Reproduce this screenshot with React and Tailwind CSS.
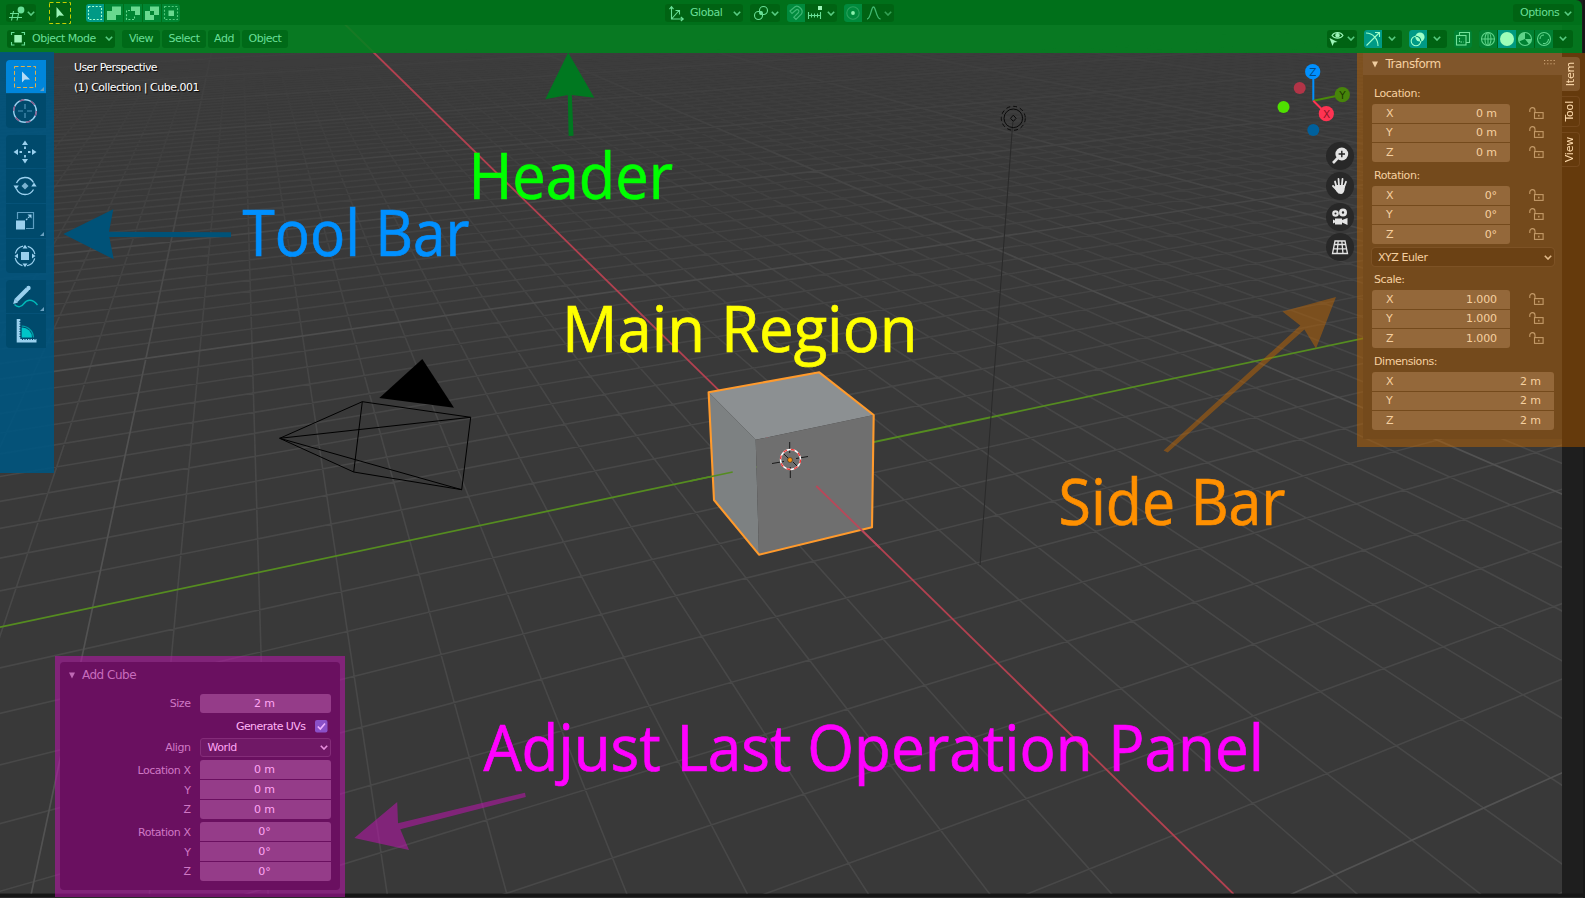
import React from "react";

/* ---------- perspective floor grid ---------- */
const ORIGIN = [790.2, 459.8];
const VAN_X = [239.6, -78.7];
const VAN_Y = [3579, -131.2];
const WX = -0.04563;
const WY = 0.02001;

const depth = (x, y) => 1 + WX * x + WY * y;
function project(x, y) {
  const w = depth(x, y);
  return [
    (ORIGIN[0] + WX * x * VAN_X[0] + WY * y * VAN_Y[0]) / w,
    (ORIGIN[1] + WX * x * VAN_X[1] + WY * y * VAN_Y[1]) / w,
  ];
}
function segment(fixed, value, from, to) {
  const pt = (t) => (fixed === "x" ? [value, t] : [t, value]);
  let a = from;
  let b = to;
  const da = depth(...pt(a));
  const db = depth(...pt(b));
  const near = 0.12;
  if (da < near && db < near) return "";
  if (da < near) a = a + ((near - da) / (db - da)) * (b - a);
  if (db < near) b = b + ((near - db) / (da - db)) * (a - b);
  const p = project(...pt(a));
  const q = project(...pt(b));
  return `M${p[0].toFixed(1)} ${p[1].toFixed(1)}L${q[0].toFixed(1)} ${q[1].toFixed(1)}`;
}
function gridPath(step, reach) {
  let d = "";
  for (let i = -reach; i <= reach; i += 1) {
    if (i === 0) continue;
    const major = i % 10 === 0;
    if ((step === 10) !== major) continue;
    d += segment("x", i, -reach, reach);
    d += segment("y", i, -reach, reach);
  }
  return d;
}
const MINOR = gridPath(1, 110);
const MAJOR = gridPath(10, 400);

function Scene() {
  return (
    <svg className="absolute left-0 top-0" width="1585" height="898" viewBox="0 0 1585 898">
      <defs>
        <linearGradient id="fadeMinor" x1="0" y1="0" x2="0" y2="1">
          <stop offset="0" stopColor="#fff" stopOpacity="0.12" />
          <stop offset="0.1" stopColor="#fff" stopOpacity="0.28" />
          <stop offset="0.3" stopColor="#fff" stopOpacity="0.7" />
          <stop offset="0.5" stopColor="#fff" stopOpacity="1" />
        </linearGradient>
        <mask id="maskMinor" maskUnits="userSpaceOnUse" x="0" y="0" width="1585" height="898">
          <rect width="1585" height="898" fill="url(#fadeMinor)" />
        </mask>
        <clipPath id="view">
          <rect width="1562" height="893.5" />
        </clipPath>
      </defs>
      <rect width="1585" height="898" fill="#1e1e1e" />
      <rect y="893.5" width="1585" height="4.5" fill="#161616" />
      <rect y="897" width="1585" height="1" fill="#292929" />
      <rect x="1583" width="2" height="898" fill="#171717" />
      <g clipPath="url(#view)">
        <rect width="1562" height="894" fill="#393939" />
        <g mask="url(#maskMinor)" fill="none">
          <path d={MINOR} stroke="#484848" strokeWidth="1.6" />
          <path d={MAJOR} stroke="#525252" strokeWidth="1.7" />
        </g>
        <path d="M340 19.5L1233.5 894" stroke="#b24150" strokeWidth="1.8" />
        <path d="M0 627.2L1562 296.2" stroke="#558c20" strokeWidth="1.8" />
        {/* sun lamp */}
        <path d="M1012.8 122L980 565" stroke="#2a2a2a" strokeWidth="1" />
        <g fill="none" stroke="#0a0a0a">
          <circle cx="1013.3" cy="118.3" r="9.3" />
          <circle cx="1013.3" cy="118.3" r="12" strokeDasharray="4 3" />
          <path d="M1013.3 115.2l2.8 3.1-2.8 3.1-2.8-3.1z" />
        </g>
        {/* camera */}
        <path
          d="M279.7 438.3L362.3 401.7L470.7 417.3L461.7 489.7L353.7 472ZL470.7 417.3M279.7 438.3L461.7 489.7M362.3 401.7L353.7 472"
          fill="none"
          stroke="#000"
        />
        <path d="M422.3 359L379.3 398L454 407.7Z" fill="#000" />
        {/* cube */}
        <path d="M708.6 392.3L819.3 372.3L873.7 415L755.7 439.7Z" fill="#8c9092" />
        <path d="M708.6 392.3L755.7 439.7L759 554.7L714 500Z" fill="#7d8182" />
        <path d="M755.7 439.7L873.7 415L872 527.3L759 554.7Z" fill="#6f6f6f" />
        <path
          d="M708.6 392.3L819.3 372.3L873.7 415L872 527.3L759 554.7L714 500Z"
          fill="none"
          stroke="#ff9a2c"
          strokeWidth="2.1"
          strokeLinejoin="round"
        />
        <path d="M690 481L732.7 472" stroke="#558c20" strokeWidth="1.6" />
        <path d="M816.3 486L880 548" stroke="#b9485a" strokeWidth="1.8" />
        {/* 3D cursor */}
        <g stroke="#1a1a1a" strokeWidth="1">
          <path d="M789.7 442v11M790.3 467v11M772 463.5l12-2M796 458.5l12-2M784 454l4 4M793 462l4 4" />
        </g>
        <circle cx="790.5" cy="459.5" r="10" fill="none" stroke="#fff" strokeWidth="1.4" />
        <circle cx="790.5" cy="459.5" r="10" fill="none" stroke="#f03a3a" strokeWidth="1.4" strokeDasharray="3.93 3.93" />
        <circle cx="790" cy="460" r="2.4" fill="#ff9312" stroke="#3a2a10" strokeWidth="0.6" />
      </g>
      {/* arrows */}
      <path d="M568.2 52.5L594.3 97.7L571.8 95L573.5 135.7L568.6 136L567.8 95L545.3 99.3Z" fill="#007820" />
      <path d="M63.3 234L113.3 209.3L109 231.7L231 232.3V237.3L109.3 237L113.7 259.3Z" fill="#005278" />
      <path
        d="M1336 297L1282.4 311.6L1300.3 325.5L1163.6 450.4L1167.7 452.4L1304.4 329.4L1316 348.4Z"
        fill="#b86508"
        fillOpacity="0.53"
      />
      <path
        d="M354.3 838L397.2 802L398 823.3L525 792.7L525.8 797L400.3 829.3L409 850Z"
        fill="#be14af"
        fillOpacity="0.55"
      />
      {/* region captions */}
      <g fontFamily="'Open Sans','Noto Sans',sans-serif" fontSize="63.5" strokeWidth="0.7">
        <text x="468.5" y="199" textLength="204.5" lengthAdjust="spacingAndGlyphs" fill="#00ff00" stroke="#00ff00">Header</text>
        <text x="242.5" y="256" textLength="227" lengthAdjust="spacingAndGlyphs" fill="#0090ff" stroke="#0090ff">Tool Bar</text>
        <text x="562" y="352" textLength="355.5" lengthAdjust="spacingAndGlyphs" fill="#ffff00" stroke="#ffff00">Main Region</text>
        <text x="1058.5" y="525" textLength="227" lengthAdjust="spacingAndGlyphs" fill="#ff9000" stroke="#ff9000">Side Bar</text>
        <text x="483.5" y="771" textLength="780.5" lengthAdjust="spacingAndGlyphs" fill="#ff00ff" stroke="#ff00ff">Adjust Last Operation Panel</text>
      </g>
      {/* axis gizmo */}
      <g strokeWidth="2" fontFamily="'DejaVu Sans',sans-serif" fontSize="10.5" textAnchor="middle">
        <path d="M1313.3 100.7V72" stroke="#0090ff" />
        <path d="M1313.3 100.7L1342.3 94.7" stroke="#4a8a0a" />
        <path d="M1313.3 100.7L1326.3 113.7" stroke="#ff3352" />
        <circle cx="1299.7" cy="88" r="6" fill="#b23447" />
        <circle cx="1283.5" cy="107" r="6" fill="#4fe000" />
        <circle cx="1313.3" cy="130" r="6" fill="#00609c" />
        <circle cx="1312.7" cy="71.7" r="7.6" fill="#0090ff" />
        <circle cx="1342.3" cy="94.7" r="7.6" fill="#47850a" />
        <circle cx="1326.3" cy="113.7" r="7.6" fill="#ff3352" />
        <text x="1312.9" y="75.6" fill="#004a85">Z</text>
        <text x="1342.5" y="98.5" fill="#1c3a02">Y</text>
        <text x="1326.5" y="117.5" fill="#8a1526">X</text>
      </g>
    </svg>
  );
}

/* ---------- small shared pieces ---------- */
function Caret({ className = "", dim = false }) {
  return (
    <svg className={"shrink-0 " + className} width="8" height="5" viewBox="0 0 8 5" fill="none" stroke="currentColor" strokeWidth="1.6" opacity={dim ? 0.5 : 0.85}>
      <path d="M0.8 0.8L4 4L7.2 0.8" />
    </svg>
  );
}
function Icon({ children, w = 18, className = "" }) {
  return (
    <svg className={"shrink-0 " + className} width={w} height="18" viewBox={`0 0 ${w} 18`} fill="none" stroke="currentColor" strokeWidth="1.1">
      {children}
    </svg>
  );
}
const pill = "flex h-[18px] shrink-0 items-center rounded-[3px] bg-[#006313] text-[#69df97]";

function HeaderTop() {
  return (
    <div className="flex h-[25px] w-[1582px] items-center rounded-tr-md bg-[#00701a] pt-px text-[11px] tracking-[-0.45px]">
      <div className={pill + " ml-[6px] w-[30px]"}>
        <Icon w={20} className="ml-[3px]">
          <path d="M1 9.5H10M0 13.5H13M4.5 7L2.5 16.5M9.5 10L8 16.5" />
          <circle cx="12" cy="6" r="3.4" fill="currentColor" stroke="none" />
        </Icon>
        <Caret className="-ml-[2px]" />
      </div>
      <svg className="ml-[13px] shrink-0" width="22" height="22" viewBox="0 0 22 22">
        <rect width="22" height="22" rx="2" fill="#006313" />
        <rect x="0.5" y="0.5" width="21" height="21" fill="none" stroke="#c4cf00" strokeDasharray="4 2.6" />
        <path d="M7.5 5v11l2.6-2.5 4.9.2z" fill="#9cf5b8" />
      </svg>
      <div className="ml-[15px] flex gap-px overflow-hidden rounded-[3px] text-[#69d98f]">
        <Icon className="bg-[#009a86] text-[#a8ffd0]">
          <rect x="2.5" y="2.5" width="13" height="13" strokeDasharray="2 1.6" />
        </Icon>
        <Icon className="bg-[#008532]">
          <path d="M7 2.5H16V11H11V16H2V7H7Z" fill="currentColor" stroke="none" />
        </Icon>
        <Icon className="bg-[#008532]">
          <path d="M7 2.5H16V11H11V7H7Z" fill="currentColor" stroke="none" />
          <path d="M6 6.5H2.5V15.5H10.5V12" strokeDasharray="2 1.6" />
        </Icon>
        <Icon className="bg-[#008532]">
          <path fillRule="evenodd" d="M7 2.5H16V11H11V16H2V7H7ZM7 7V11H11V7Z" fill="currentColor" stroke="none" />
        </Icon>
        <Icon className="bg-[#008532]">
          <rect x="2.5" y="2.5" width="13" height="13" strokeDasharray="2 1.6" opacity=".8" />
          <rect x="6.5" y="6.5" width="5.5" height="5.5" fill="currentColor" stroke="none" />
        </Icon>
      </div>
      <div className={pill + " ml-[485px] w-[78px]"}>
        <Icon className="ml-[3px]">
          <path d="M3.5 3V15H15M1.5 5.2L3.5 2.6L5.5 5.2M12.8 13L15.3 15L12.8 17M3.5 15L11 6.5M7.5 6.5H11.5V10.5" />
        </Icon>
        <span className="ml-[4px] pt-px">Global</span>
        <Caret className="ml-auto mr-[2px]" />
      </div>
      <div className={pill + " ml-[7px] w-[30px]"}>
        <Icon w={16} className="ml-[3px]">
          <circle cx="10.5" cy="6.5" r="4" />
          <circle cx="5.5" cy="11.5" r="4" />
          <circle cx="8" cy="9" r="1.4" fill="currentColor" />
        </Icon>
        <Caret className="ml-[2px]" />
      </div>
      <div className={pill + " ml-[7px] w-[50px] overflow-hidden"}>
        <Icon className="bg-[#008a3c] text-[#3fb874]">
          <path d="M3 7L8 2.8C11 .8 17 5.5 14.5 10L9 15.5L6.8 13.2L11.5 8.5C12.8 6.5 10.5 4.5 9 6L5 9.5Z" strokeWidth="1.2" />
        </Icon>
        <Icon w={17} className="ml-[2px]">
          <path d="M1.5 8V15M13.5 8V15M1.5 11.5H13.5M4.5 9.5V13.5M7.5 9.5V13.5M10.5 9.5V13.5" />
          <rect x="11" y="2" width="4" height="4" fill="#9cf5b8" stroke="none" />
        </Icon>
        <Caret className="ml-[3px]" />
      </div>
      <div className={pill + " ml-[7px] w-[50px] overflow-hidden"}>
        <Icon className="bg-[#008a3c] text-[#2aa35c]">
          <circle cx="9" cy="9" r="6.2" />
          <circle cx="9" cy="9" r="1.9" fill="#8bf0ac" stroke="none" />
        </Icon>
        <Icon w={17} className="ml-[4px] text-[#3fb870]">
          <path d="M1 15C5 15 5 3 7.5 3S10 15 14.5 15" strokeWidth="1.3" />
        </Icon>
        <Caret className="ml-[1px]" dim />
      </div>
      <div className={pill + " ml-auto mr-[8px] w-[61px]"}>
        <span className="ml-[7px] pt-px">Options</span>
        <Caret className="ml-auto mr-[2px]" />
      </div>
    </div>
  );
}

function ShadeIcon({ active = false, children }) {
  return (
    <Icon className={active ? "bg-[#009a80] text-[#9dffb8]" : "bg-[#008032] text-[#5fd48a]"}>{children}</Icon>
  );
}

function HeaderBottom() {
  const menu = "flex h-[18px] items-center justify-center rounded-[3px] bg-[#006a18] pt-px text-[#69df97]";
  return (
    <div className="flex h-[28px] w-[1582px] items-center bg-[#00821e]/[0.87] pb-[2px] pt-[1px] text-[11px] tracking-[-0.5px]">
      <div className={pill + " ml-[7px] w-[108px]"}>
        <Icon w={16} className="ml-[3px]">
          <path d="M1.5 5V2.5H4.5M11.5 2.5H14.5V5M14.5 12V15H11.5M4.5 15H1.5V12" />
          <rect x="4.3" y="5" width="7.5" height="7.5" fill="#9cf5b8" stroke="none" />
        </Icon>
        <span className="ml-[6px] whitespace-nowrap pt-px">Object Mode</span>
        <Caret className="ml-auto mr-[2px]" />
      </div>
      <div className="ml-[7px] flex gap-[2px]">
        <span className={menu + " w-[38px]"}>View</span>
        <span className={menu + " w-[44px]"}>Select</span>
        <span className={menu + " w-[32px]"}>Add</span>
        <span className={menu + " w-[46px]"}>Object</span>
      </div>
      <div className="ml-auto mr-[9px] flex items-center">
        <div className={pill + " w-[30px]"}>
          <Icon w={16} className="ml-[2px] text-[#9cf5b8]">
            <path d="M3 5.5C5.5 1.5 11.5 1.5 14 5.5C11.5 9 5.5 9 3 5.5Z" />
            <circle cx="8.5" cy="5.3" r="1.7" fill="currentColor" />
            <path d="M.5 8L3.5 16L5 12.5L8.5 12Z" fill="currentColor" stroke="none" />
          </Icon>
          <Caret className="ml-[2px]" />
        </div>
        <div className={pill + " ml-[7px] w-[38px] overflow-hidden"}>
          <Icon className="bg-[#009a86] text-[#9dffc8]">
            <path d="M2 3C9 3 14 9 14 16M2.5 15.5L15 3M11 2.5H15.5V7" />
          </Icon>
          <Caret className="ml-[6px]" />
        </div>
        <div className={pill + " ml-[7px] w-[38px] overflow-hidden"}>
          <Icon className="bg-[#009a86] text-[#9dffc8]">
            <circle cx="11" cy="7" r="4.6" fill="currentColor" stroke="none" />
            <circle cx="7" cy="11" r="4.8" />
            <path d="M7 6.2A4.8 4.8 0 0 1 11.8 11" stroke="#008a70" />
          </Icon>
          <Caret className="ml-[6px]" />
        </div>
        <div className="ml-[7px] flex overflow-hidden rounded-[3px]">
          <Icon className="bg-[#008032] text-[#72e29a]">
            <path d="M5.5 6V2.5H15.5V12.5H12" />
            <rect x="2.5" y="5.5" width="9.5" height="9.5" />
            <path d="M5.5 8V12H9.5" strokeDasharray="1.5 1" />
          </Icon>
        </div>
        <div className={pill + " ml-[7px] w-[94px] gap-[0.7px] overflow-hidden"}>
          <ShadeIcon>
            <circle cx="9" cy="9" r="6.5" />
            <ellipse cx="9" cy="9" rx="3" ry="6.5" />
            <path d="M2.5 9H15.5M9 2.5V15.5" />
          </ShadeIcon>
          <ShadeIcon active>
            <circle cx="9" cy="9" r="7" fill="currentColor" stroke="none" />
          </ShadeIcon>
          <ShadeIcon>
            <circle cx="9" cy="9" r="6.5" />
            <path d="M9 2.5A6.5 6.5 0 0 0 3 11.5L9 9ZM9 9H15.5A6.5 6.5 0 0 1 13 14.2Z" fill="currentColor" stroke="none" />
          </ShadeIcon>
          <ShadeIcon>
            <circle cx="9" cy="9" r="6.5" />
            <path d="M5 9A4 4 0 0 1 9 5M13.5 9A4.5 4.5 0 0 1 8 13.5" />
          </ShadeIcon>
          <Caret className="ml-[5px]" />
        </div>
      </div>
    </div>
  );
}

/* ---------- tool bar ---------- */
function Tool({ active = false, more = false, h = "h-[34px]", children }) {
  return (
    <div className={"relative flex w-[40px] items-center justify-center pr-[2px] " + h + (active ? " bg-[#0086db]" : " bg-[#004a6c]")}>
      <svg width="26" height="26" viewBox="0 0 26 26" fill="none" stroke="#9ad0ee" strokeWidth="1.2">
        {children}
      </svg>
      {more && (
        <svg className="absolute bottom-[2px] right-[2px]" width="4" height="4" viewBox="0 0 4 4">
          <path d="M4 0V4H0Z" fill="#6aa0c0" />
        </svg>
      )}
    </div>
  );
}
function ToolBar() {
  return (
    <div className="-mt-px h-[421px] w-[54px] bg-[#005580]/90 pl-[6px] pt-[8px]">
      <div className="overflow-hidden rounded-[4px]">
        <Tool active more h="h-[33px]">
          <rect x="2.5" y="2.5" width="21" height="21" stroke="#e0b04a" strokeDasharray="4 2.3" strokeWidth="1" />
          <path d="M10 7.5V18.5L12.8 15.6L18 15.4Z" fill="#b5dcf5" stroke="none" />
        </Tool>
        <div className="h-px" />
        <Tool>
          <circle cx="13" cy="13" r="11.3" strokeWidth="1.4" />
          <circle cx="13" cy="13" r="11.3" stroke="#8a5a88" strokeWidth="1.4" strokeDasharray="5 6.8" />
          <path d="M13 6V11M13 15V20M6 13H11M15 13H20" stroke="#4f94b8" />
        </Tool>
      </div>
      <div className="mt-[7px] flex flex-col gap-px overflow-hidden rounded-[4px]">
        <Tool h="h-[33px]">
          <path d="M13 1.5L16 6H10ZM13 24.5L16 20H10ZM1.5 13L6 10V16ZM24.5 13L20 10V16Z" fill="#9ad0ee" stroke="none" />
          <path d="M13 7.5V10M13 16V18.5M7.5 13H10M16 13H18.5" strokeWidth="1.8" />
        </Tool>
        <Tool>
          <path d="M4.5 10A9.5 9.5 0 0 1 21.5 9.5M21.5 16.5A9.5 9.5 0 0 1 4.5 16" strokeWidth="1.3" />
          <path d="M1.5 12.5H6.8L4 16.5ZM19.3 13.5H24.6L22 9.5Z" fill="#9ad0ee" stroke="none" />
          <path d="M13 9.5L16.5 13L13 16.5L9.5 13Z" fill="#7ab2d0" stroke="none" />
        </Tool>
        <Tool more>
          <path d="M5.5 11V4.5H21.5V20.5H14" stroke="#5f9fc2" />
          <rect x="4" y="12.5" width="9" height="9" fill="#9ad0ee" stroke="none" />
          <path d="M14 12L18 8" strokeDasharray="2 1" />
          <path d="M15.5 6.5H19.5V10.5Z" fill="#9ad0ee" stroke="none" />
        </Tool>
        <Tool>
          <circle cx="13" cy="13" r="10" strokeDasharray="11 4.7" strokeDashoffset="-2.5" />
          <rect x="9" y="9" width="8" height="8" fill="#9ad0ee" stroke="none" />
          <path d="M13 1.8L15.5 5.5H10.5ZM13 24.2L15.5 20.5H10.5ZM2.5 13L6 10.5V15.5ZM23.5 13L20 10.5V15.5Z" fill="#9ad0ee" stroke="none" />
        </Tool>
      </div>
      <div className="mt-[7px] flex flex-col gap-px overflow-hidden rounded-[4px]">
        <Tool more h="h-[33px]">
          <path d="M4 16.5L15.5 5" strokeWidth="4.2" />
          <path d="M1.2 20L2.5 15L6 18.5Z" fill="#9ad0ee" stroke="none" />
          <circle cx="16.5" cy="4" r="2.2" fill="#9ad0ee" stroke="none" />
          <path d="M2.5 20.5C6 24 9.5 23 12 19.5S20 14 25.5 21" stroke="#00b8b8" strokeWidth="1.4" />
        </Tool>
        <Tool>
          <path d="M6.5 1V22.8H24.5" strokeWidth="3.6" />
          <path d="M8.2 3V20M10 21.2H24" stroke="#004a6c" strokeWidth="1.6" strokeDasharray="1 1.5" />
          <path d="M9.7 9.5A10 10 0 0 1 20 19.5H9.7Z" fill="#00c4c8" stroke="none" />
          <path d="M9.7 8A12 12 0 0 1 21.5 19.5" stroke="#00a0a8" />
        </Tool>
      </div>
    </div>
  );
}

/* ---------- viewport navigation buttons ---------- */
function NavButton({ children }) {
  return (
    <div className="flex h-[28px] w-[28px] items-center justify-center rounded-full bg-[#282828]">
      <svg width="18" height="18" viewBox="0 0 18 18" fill="#e4e4e4">
        {children}
      </svg>
    </div>
  );
}
function NavButtons() {
  return (
    <div className="mr-[3px] mt-[89px] flex flex-col gap-[2.4px]">
      <NavButton>
        <circle cx="10.8" cy="7" r="6.4" />
        <path d="M6.8 11L2 16" stroke="#e4e4e4" strokeWidth="2.6" />
        <path d="M10.8 3.8V10.2M7.6 7H14" stroke="#222" strokeWidth="1.4" />
      </NavButton>
      <NavButton>
        <path d="M5.5 10L4 4.5M8 9L7.5 2M10.8 9L11.5 2M13 10L15 4.8M6.5 13.5L2 9" stroke="#e4e4e4" strokeWidth="1.8" strokeLinecap="round" />
        <path d="M4.7 8H14.2L13.5 13Q12.5 17 10 17Q7 17 5.5 14.5L3.5 10.8Z" />
      </NavButton>
      <NavButton>
        <path fillRule="evenodd" d="M4.5 2.2A3.3 3.3 0 1 0 4.5 8.8A3.3 3.3 0 1 0 4.5 2.2ZM4.5 4.5A1 1 0 1 1 4.5 6.5A1 1 0 1 1 4.5 4.5Z" />
        <path fillRule="evenodd" d="M12 .5A4 4 0 1 0 12 8.5A4 4 0 1 0 12 .5ZM12 3.3A1.2 1.2 0 1 1 12 5.7A1.2 1.2 0 1 1 12 3.3Z" />
        <path d="M4 10.5H11V12L16.5 10V17L11 14.5V16.5H4V14.5L2 15.5V11.5L4 12.5Z" />
      </NavButton>
      <NavButton>
        <path d="M4 3H14L16.5 15.5H1.5ZM7.2 3L6 15.5M10.8 3L12 15.5M3.3 6.5H14.7M2.5 10.8H15.5" fill="none" stroke="#e4e4e4" strokeWidth="1.3" />
      </NavButton>
    </div>
  );
}

/* ---------- side bar ---------- */
function Lock() {
  return (
    <svg width="15" height="12" viewBox="0 0 15 12" fill="none" stroke="#c39a68" strokeWidth="1.1">
      <path d="M.8 5V3.2A2.6 2.6 0 0 1 6 3.2V6" />
      <rect x="5.5" y="5.6" width="8.6" height="5.8" />
      <path d="M9.8 7.8V9.5" strokeWidth="1.4" />
    </svg>
  );
}
function Vector({ label, values, locks = true, top }) {
  return (
    <div className={top}>
      <div className="h-[14px] pl-[2px] leading-[16px]">{label}</div>
      <div className="mt-[4px] flex">
        <div className={"flex h-[58px] flex-col gap-px overflow-hidden rounded-[3px] " + (locks ? "w-[138px]" : "w-[182px]")}>
          {["X", "Y", "Z"].map((axis, i) => (
            <div key={axis} className="flex flex-1 items-center justify-between bg-[#94683a] pl-[14px] pr-[13px] pt-px">
              <span>{axis}</span>
              <span className="tracking-[-0.1px]">{values[i]}</span>
            </div>
          ))}
        </div>
        {locks && (
          <div className="ml-[19px] flex flex-col gap-[7.7px] pt-[2.5px]">
            <Lock />
            <Lock />
            <Lock />
          </div>
        )}
      </div>
    </div>
  );
}
function Tab({ active = false, className = "", children }) {
  return (
    <div
      className={
        "flex w-[18px] items-center justify-center rounded-r-[4px] text-[11px] tracking-[-0.2px] text-[#ffdcae] [writing-mode:vertical-rl] " +
        (active ? "bg-[#80562b] " : "border border-l-0 border-[#74481c] bg-[#653a0c] ") +
        className
      }
    >
      <span className="rotate-180">{children}</span>
    </div>
  );
}
function SideBar() {
  return (
    <div className="flex h-[394px] w-[228px] bg-[#b86508]/[0.53] pl-[6px]">
      <div className="h-[386px] w-[199px] bg-[#744a1c] text-[11px] tracking-[-0.45px] text-[#f6d0a0]">
        <div className="flex h-[22px] items-center bg-[#80562b] pl-[9px] pr-[7px] text-[12px] tracking-[-0.5px]">
          <svg width="6" height="7" viewBox="0 0 6 7">
            <path d="M0 0.5H6L3 6.5Z" fill="#f0cda0" />
          </svg>
          <span className="ml-[7.5px]">Transform</span>
          <svg className="-mt-[3px] ml-auto" width="11" height="5" viewBox="0 0 11 5">
            <path d="M0 .5H11M0 3.8H11" stroke="#d0a878" strokeDasharray="1.2 2" />
          </svg>
        </div>
        <div className="pl-[9px]">
          <Vector top="mt-[11px]" label="Location:" values={["0 m", "0 m", "0 m"]} />
          <Vector top="mt-[6px]" label="Rotation:" values={["0°", "0°", "0°"]} />
          <div className="mt-[4px] flex h-[18px] w-[182px] items-center rounded-[3px] bg-[#6b4114] pl-[6px] outline outline-1 outline-[#7d5225]">
            <span className="pt-[2px]">XYZ Euler</span>
            <Caret className="ml-auto mr-[2px]" />
          </div>
          <Vector top="mt-[6px]" label="Scale:" values={["1.000", "1.000", "1.000"]} />
          <Vector top="mt-[6px]" label="Dimensions:" values={["2 m", "2 m", "2 m"]} locks={false} />
        </div>
      </div>
      <div className="flex w-[23px] flex-col bg-[#653a0c] pt-[4px]">
        <Tab active className="h-[34px]">Item</Tab>
        <Tab className="mt-[5px] h-[31px]">Tool</Tab>
        <Tab className="mt-[5px] h-[35px]">View</Tab>
      </div>
    </div>
  );
}

/* ---------- floating operation panel ---------- */
function OpGroup({ name, value }) {
  return (
    <div className="mt-[3px] flex">
      <div className="flex h-[59px] w-[130.5px] flex-col pt-px text-right text-[#cf78c4]">
        <span className="h-[19.5px] leading-[20px]">{name} X</span>
        <span className="h-[19.5px] leading-[20px]">Y</span>
        <span className="h-[19.5px] leading-[20px]">Z</span>
      </div>
      <div className="ml-[9px] flex h-[59px] w-[131px] flex-col gap-px overflow-hidden rounded-[3px] text-[#ffa6f4]">
        {[0, 1, 2].map((i) => (
          <div key={i} className="flex flex-1 items-center justify-center bg-[#953c89] pr-px pt-[2px] tracking-[-0.1px]">
            {value}
          </div>
        ))}
      </div>
    </div>
  );
}
function OperationPanel() {
  return (
    <div className="absolute left-[55px] top-[656px] h-[241px] w-[290px] bg-[#be14af]/55 px-[5px] pt-[6px]">
      <div className="h-[228px] w-[280px] rounded-[4px] bg-[#6a1060] text-[11px] tracking-[-0.45px]">
        <div className="flex h-[26px] items-center pl-[9px] text-[12px] tracking-[-0.5px] text-[#c86cbd]">
          <svg width="6" height="7" viewBox="0 0 6 7">
            <path d="M0 0.5H6L3 6.5Z" fill="#c06ab5" />
          </svg>
          <span className="ml-[7px]">Add Cube</span>
        </div>
        <div className="mt-[6px] flex h-[19px] items-center">
          <span className="w-[130.5px] pt-[2px] text-right text-[#cf78c4]">Size</span>
          <span className="ml-[9px] flex h-[19px] w-[131px] items-center justify-center rounded-[3px] bg-[#953c89] pr-px pt-[2px] tracking-[-0.1px] text-[#ffa6f4]">2 m</span>
        </div>
        <div className="mt-[7px] flex h-[13px] items-center">
          <span className="w-[245.5px] pt-px text-right tracking-[-0.55px] text-[#ffb4f6]">Generate UVs</span>
          <svg className="ml-[9px]" width="13" height="13" viewBox="0 0 13 13">
            <rect width="12.5" height="12.5" rx="2" fill="#8a50c8" />
            <path d="M2.8 6.5L5.3 9L10 3.5" fill="none" stroke="#eeb0ff" strokeWidth="1.6" />
          </svg>
        </div>
        <div className="mt-[5px] flex h-[19px] items-center">
          <span className="w-[130.5px] pt-[2px] text-right text-[#cf78c4]">Align</span>
          <span className="ml-[9px] flex h-[19px] w-[131px] items-center rounded-[3px] border border-[#842c79] bg-[#701866] pl-[7px] text-[#ffa6f4]">
            <span className="pt-[2px]">World</span>
            <Caret className="ml-auto mr-[2px]" />
          </span>
        </div>
        <OpGroup name="Location" value="0 m" />
        <OpGroup name="Rotation" value="0°" />
      </div>
    </div>
  );
}

export default function App() {
  return (
    <div className="relative h-[898px] w-[1585px] overflow-hidden font-['DejaVu_Sans',sans-serif]">
      <Scene />
      <div className="relative flex flex-col">
        <HeaderTop />
        <HeaderBottom />
        <div className="flex items-start">
          <ToolBar />
          <div className="ml-[20px] mt-[5px] text-[11px] leading-[20px] tracking-[-0.58px] text-white [text-shadow:1px_1px_1px_#000]">
            <div>User Perspective</div>
            <div className="tracking-[-0.48px]">(1) Collection | Cube.001</div>
          </div>
          <div className="ml-auto">
            <NavButtons />
          </div>
          <SideBar />
        </div>
      </div>
      <OperationPanel />
    </div>
  );
}
